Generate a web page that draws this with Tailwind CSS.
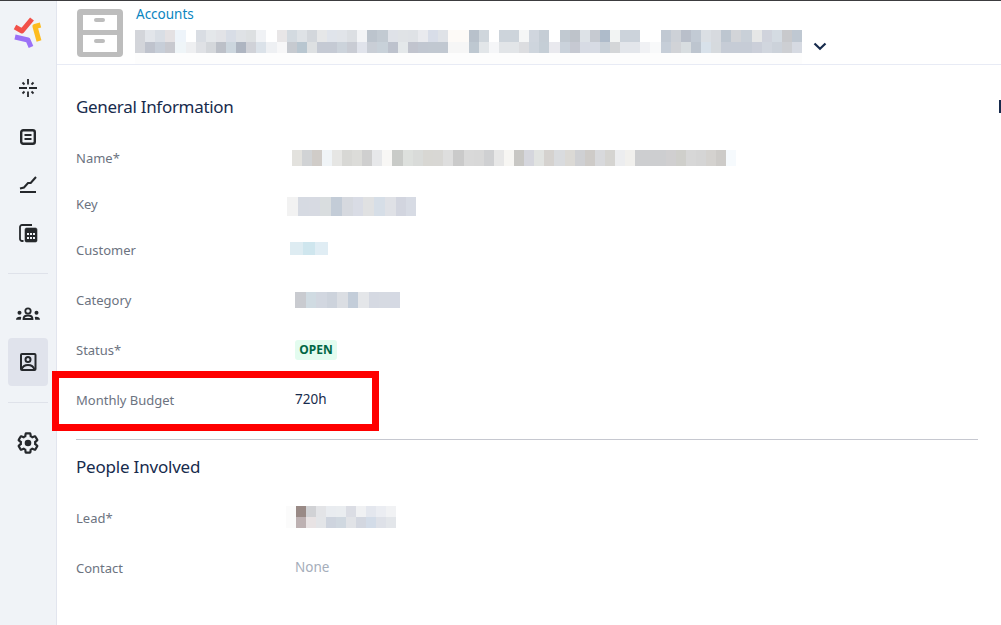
<!DOCTYPE html>
<html><head><meta charset="utf-8"><script src="https://cdn.jsdelivr.net/npm/@tailwindcss/browser@4"></script></head>
<body class="bg-white">
<div class="relative flex w-[1001px] h-[625px] overflow-hidden border-t border-[#3c3c3f] bg-white font-['Noto_Sans','Liberation_Sans',sans-serif]">
  <aside class="w-[57px] shrink-0 bg-[#f0f3f7] border-r border-[#e2e5ee] flex flex-col items-center">
    <svg class="mt-[14px] w-[32px] h-[34px]" viewBox="0 0 32 34" fill="none" stroke-linejoin="round"><path d="M3 12l7 4L20 4" stroke="#f25149" stroke-width="5"/><path d="M28.500 10 23 11.500 27 26" stroke="#fdbc1f" stroke-width="5"/><path d="M3 22l13 3 3 7" stroke="#9b71f7" stroke-width="5"/></svg>
    <svg class="mt-[27px] w-[24px] h-[24px]" viewBox="0 0 24 24" fill="none" stroke="#25282c" stroke-width="1.800"><path d="M12 3v5.500M12 15.500V21M3 12h8M13 12h8M6.500 6.500l2 2M15.500 15.500l2 2M17.500 6.500l-2 2M8.500 15.500l-2 2"/></svg>
    <svg class="mt-[25px] w-[24px] h-[24px]" viewBox="0 0 24 24" fill="none" stroke="#25282c" stroke-width="2.400"><rect x="5.200" y="5.200" width="13.600" height="13.600" rx="2"/><path d="M8.500 10h7M8.500 14h7" stroke-width="2"/></svg>
    <svg class="mt-[25px] w-[24px] h-[24px]" viewBox="0 0 24 24" fill="none" stroke="#25282c" stroke-width="2"><path d="M4 18h16"/><path d="M4 14.500 8 13.500 12 9h2.700l2.600-3L20 3" stroke-width="2"/></svg>
    <svg class="mt-[23px] w-[24px] h-[24px]" viewBox="0 0 24 24" fill="none" stroke="#25282c" stroke-width="1.800"><path d="M7.500 20H6a2 2 0 0 1-2-2V6a2 2 0 0 1 2-2h10"/><rect x="9" y="7" width="12" height="14" rx="1.500" fill="#25282c" stroke-width="0.600"/><path d="M11 13h2M14 13h2M17 13h2M11 17h2M14 17h2M17 17h2" stroke="#f0f3f7" stroke-width="1.800"/></svg>
    <div class="mt-[28px] w-[40px] h-px bg-[#dfe2ea]"></div>
    <svg class="mt-[28px] w-[24px] h-[24px]" viewBox="0 0 24 24" fill="#25282c"><circle cx="12" cy="9" r="2.700" fill="none" stroke="#25282c" stroke-width="1.800"/><circle cx="3.500" cy="10.700" r="2"/><circle cx="20.500" cy="10.700" r="2"/><path d="M7.500 17c0-2.300 2-3.500 4.500-3.500s4.500 1.200 4.500 3.500z" fill="none" stroke="#25282c" stroke-width="1.800"/><path d="M0 17.800c0-1.800 1.500-3 4-3l1.200.2L4.800 17.800zM24 17.800c0-1.800-1.500-3-4-3l-1.200.2.400 2.800z"/></svg>
    <div class="mt-[12px] w-[40px] h-[48px] rounded-[4px] bg-[#e0e3ec] flex items-center justify-center">
      <svg class="w-[24px] h-[24px]" viewBox="0 0 24 24" fill="none" stroke="#25282c" stroke-width="2"><rect x="5" y="4" width="14.500" height="16" rx="1"/><circle cx="12" cy="9.500" r="2.500"/><path d="M5.500 19.500c1-3 3.500-4.500 6.500-4.500s5.500 1.500 6.500 4.500"/></svg>
    </div>
    <div class="mt-[16px] w-[40px] h-px bg-[#dfe2ea]"></div>
    <svg class="mt-[28px] w-[24px] h-[24px]" viewBox="0 0 24 24" fill="none" stroke="#25282c" stroke-width="2.200"><path d="M19.140 12.940c.04-.3.06-.61.06-.94 0-.32-.02-.64-.07-.94l2.030-1.580c.18-.14.23-.41.12-.61l-1.920-3.320c-.12-.22-.37-.29-.59-.22l-2.390.96c-.5-.38-1.030-.7-1.620-.94l-.36-2.540c-.04-.24-.24-.41-.48-.41h-3.840c-.24 0-.43.17-.47.41l-.36 2.540c-.59.24-1.130.57-1.620.94l-2.390-.96c-.22-.08-.47 0-.59.22L2.740 8.870c-.12.21-.08.47.12.61l2.030 1.580c-.05.3-.09.63-.09.94s.02.64.07.94l-2.030 1.580c-.18.14-.23.41-.12.61l1.920 3.320c.12.22.37.29.59.22l2.390-.96c.5.38 1.030.7 1.620.94l.36 2.540c.05.24.24.41.48.41h3.840c.24 0 .44-.17.47-.41l.36-2.540c.59-.24 1.130-.56 1.620-.94l2.390.96c.22.08.47 0 .59-.22l1.920-3.320c.12-.22.07-.47-.12-.61l-2.010-1.580z"/><circle cx="12" cy="12" r="3.300" fill="#25282c" stroke="none"/></svg>
  </aside>
  <main class="flex-1 min-w-0 relative">
    <header class="h-[64px] border-b border-[#e8ebf5] flex">
      <svg class="ml-[20px] mt-[8px] w-[46px] h-[48px] shrink-0" viewBox="0 0 46 48"><rect width="46" height="48" rx="4" fill="#bdbdbd"/><rect x="6" y="6" width="34" height="15" fill="#fff"/><rect x="6" y="26" width="34" height="17" fill="#fff"/><rect x="17" y="9" width="11" height="4" rx="2" fill="#bdbdbd"/><rect x="17" y="30" width="11" height="4" rx="2" fill="#bdbdbd"/></svg>
      <div class="ml-[12px] flex flex-col">
        <div class="mt-[4px] ml-px h-[25px] text-[13.5px] leading-[18px] text-[#0a85bf]">Accounts</div>
        <div class="w-[667px] h-[35px] bg-[#fdfdfd]">
          <div class="flex h-[12px]">
            <i class="w-[10px] bg-[#d3d5da]"></i><i class="w-[10px] bg-[#e2e5ea]"></i><i class="w-[10px] bg-[#d9dee5]"></i><i class="w-[10px] bg-[#e4e1e3]"></i><i class="w-[11px] bg-[#eef4fa]"></i><i class="w-[10px] bg-white"></i><i class="w-[10px] bg-[#d9dde3]"></i><i class="w-[10px] bg-[#e4e7ea]"></i><i class="w-[10px] bg-[#e2e3e7]"></i><i class="w-[10px] bg-[#d8dde6]"></i><i class="w-[10px] bg-[#dfe2e6]"></i><i class="w-[10px] bg-[#dde0e2]"></i><i class="w-[10px] bg-[#f0f2f5]"></i><i class="w-[11px] bg-white"></i><i class="w-[10px] bg-[#e8e6e7]"></i><i class="w-[10px] bg-[#d3dae0]"></i><i class="w-[10px] bg-[#dee2e6]"></i><i class="w-[10px] bg-[#d3d7dc]"></i><i class="w-[10px] bg-[#e6e7e8]"></i><i class="w-[10px] bg-[#e0e4eb]"></i><i class="w-[10px] bg-[#e1e4e9]"></i><i class="w-[10px] bg-[#dcdfe3]"></i><i class="w-[10px] bg-[#f3f4f6]"></i><i class="w-[10px] bg-[#bcc4cd]"></i><i class="w-[11px] bg-[#c2cad2]"></i><i class="w-[10px] bg-[#dfe2e8]"></i><i class="w-[10px] bg-[#e0e3e6]"></i><i class="w-[10px] bg-[#dfe2e6]"></i><i class="w-[10px] bg-[#e9eaee]"></i><i class="w-[10px] bg-[#d8dde8]"></i><i class="w-[10px] bg-[#dfe2e7]"></i><i class="w-[21px] bg-[#fdfaf7]"></i><i class="w-[10px] bg-[#b8c1cb]"></i><i class="w-[10px] bg-[#cfd6dc]"></i><i class="w-[10px] bg-white"></i><i class="w-[20px] bg-[#cdd4db]"></i><i class="w-[10px] bg-[#f5f6f6]"></i><i class="w-[10px] bg-[#d0d6de]"></i><i class="w-[10px] bg-[#c5cdd5]"></i><i class="w-[11px] bg-white"></i><i class="w-[10px] bg-[#c1c9d1]"></i><i class="w-[10px] bg-[#bec3ca]"></i><i class="w-[10px] bg-[#dde2e7]"></i><i class="w-[10px] bg-[#c6cad1]"></i><i class="w-[10px] bg-[#aebbca]"></i><i class="w-[10px] bg-[#f2f4f3]"></i><i class="w-[20px] bg-[#ccd3db]"></i><i class="w-[21px] bg-white"></i><i class="w-[10px] bg-[#c1c9d3]"></i><i class="w-[10px] bg-[#cdd1d7]"></i><i class="w-[10px] bg-[#b9bfca]"></i><i class="w-[10px] bg-[#c2cad4]"></i><i class="w-[10px] bg-[#dbdfe4]"></i><i class="w-[10px] bg-[#d7dadf]"></i><i class="w-[10px] bg-[#bdc6d0]"></i><i class="w-[10px] bg-[#d2d4d8]"></i><i class="w-[11px] bg-[#c9d0d8]"></i><i class="w-[10px] bg-[#e6e7e7]"></i><i class="w-[10px] bg-[#d0d3dc]"></i><i class="w-[10px] bg-[#d4dbe2]"></i><i class="w-[10px] bg-[#c8c9cc]"></i><i class="w-[10px] bg-[#bfc8d2]"></i>
          </div>
          <div class="flex h-[11px]">
            <i class="w-[10px] bg-[#d3d5da]"></i><i class="w-[10px] bg-[#bfc3cd]"></i><i class="w-[10px] bg-[#c7ced8]"></i><i class="w-[10px] bg-[#c8c9cf]"></i><i class="w-[11px] bg-[#eff5f8]"></i><i class="w-[10px] bg-[#eeeff1]"></i><i class="w-[10px] bg-[#dfe1e5]"></i><i class="w-[10px] bg-[#d4d7db]"></i><i class="w-[10px] bg-[#bcc0c8]"></i><i class="w-[10px] bg-[#ccd6de]"></i><i class="w-[10px] bg-[#aeb5c1]"></i><i class="w-[10px] bg-[#d0d2d8]"></i><i class="w-[10px] bg-[#dbe2e9]"></i><i class="w-[11px] bg-[#eef0f3]"></i><i class="w-[10px] bg-[#f7f7f8]"></i><i class="w-[10px] bg-[#c6cad0]"></i><i class="w-[10px] bg-[#b8c6d0]"></i><i class="w-[10px] bg-[#dde0e2]"></i><i class="w-[20px] bg-[#c5cad4]"></i><i class="w-[10px] bg-[#ccd3db]"></i><i class="w-[10px] bg-[#c9ccd4]"></i><i class="w-[10px] bg-[#e0e3eb]"></i><i class="w-[10px] bg-[#c9ced6]"></i><i class="w-[11px] bg-[#c8d1d9]"></i><i class="w-[10px] bg-[#bdc2cd]"></i><i class="w-[10px] bg-[#e4e8ea]"></i><i class="w-[10px] bg-[#c1c4ce]"></i><i class="w-[10px] bg-[#c1c7d1]"></i><i class="w-[20px] bg-[#c1c8d1]"></i><i class="w-[21px] bg-[#f6f6f6]"></i><i class="w-[10px] bg-[#bec8d1]"></i><i class="w-[10px] bg-[#e2e6e9]"></i><i class="w-[10px] bg-[#f5f6f8]"></i><i class="w-[20px] bg-[#e2e5e8]"></i><i class="w-[10px] bg-[#dcdde0]"></i><i class="w-[10px] bg-[#ced5dd]"></i><i class="w-[10px] bg-[#c5ced6]"></i><i class="w-[11px] bg-[#e9e9ee]"></i><i class="w-[10px] bg-[#cad2db]"></i><i class="w-[10px] bg-[#c6c9d2]"></i><i class="w-[20px] bg-[#d7dbe4]"></i><i class="w-[10px] bg-[#c8d0d8]"></i><i class="w-[10px] bg-[#d4d6d8]"></i><i class="w-[20px] bg-[#e3e6eb]"></i><i class="w-[10px] bg-[#f0f1f4]"></i><i class="w-[11px] bg-[#f8f9fa]"></i><i class="w-[10px] bg-[#c6ced8]"></i><i class="w-[10px] bg-[#d1d3d7]"></i><i class="w-[10px] bg-[#d8dde0]"></i><i class="w-[10px] bg-[#bdc5cf]"></i><i class="w-[10px] bg-[#d8e1ea]"></i><i class="w-[10px] bg-[#d6dade]"></i><i class="w-[31px] bg-[#c6ccd6]"></i><i class="w-[10px] bg-[#cbcfd9]"></i><i class="w-[10px] bg-[#d1d6de]"></i><i class="w-[10px] bg-[#ccd2da]"></i><i class="w-[10px] bg-[#cdcfd3]"></i><i class="w-[10px] bg-[#d6dae2]"></i>
          </div>
        </div>
      </div>
      <svg class="ml-[10px] mt-[38px] w-[16px] h-[16px]" viewBox="0 0 16 16" fill="none" stroke="#172b4d" stroke-width="2.200"><path d="M2.500 4.500 8 9.800l5.500-5.300"/></svg>
    </header>
    <div class="pl-[19px] pr-[23px]">
      <h2 class="mt-[29px] h-[26px] text-[17px] tracking-[-0.3px] leading-[26px] text-[#172b4d]">General Information</h2>
      <div class="text-[13px] text-[#6c737f]">
        <div class="mt-[28px] h-[20px] leading-[20px] flex"><span class="w-[216px] shrink-0">Name*</span>
          <div class="flex h-[16px] w-[444px] mt-[2px] shrink-0">
            <i class="w-[10px] bg-[#e3e2de]"></i><i class="w-[10px] bg-[#d1d3d5]"></i><i class="w-[10px] bg-[#d0ccc8]"></i><i class="w-[10px] bg-[#f0f4f7]"></i><i class="w-[10px] bg-[#e6e6e4]"></i><i class="w-[10px] bg-[#d8d8d5]"></i><i class="w-[10px] bg-[#dcdcd9]"></i><i class="w-[10px] bg-[#cfcfcf]"></i><i class="w-[10px] bg-[#e7e8ea]"></i><i class="w-[10px] bg-[#f8f7f5]"></i><i class="w-[11px] bg-[#c9cbc8]"></i><i class="w-[10px] bg-[#dde0dd]"></i><i class="w-[10px] bg-[#d9dbd9]"></i><i class="w-[10px] bg-[#d8d7d3]"></i><i class="w-[10px] bg-[#d8d7d4]"></i><i class="w-[10px] bg-[#dedede]"></i><i class="w-[11px] bg-[#cacaca]"></i><i class="w-[10px] bg-[#d9d9d9]"></i><i class="w-[10px] bg-[#d8d8d8]"></i><i class="w-[10px] bg-[#cfd0d2]"></i><i class="w-[10px] bg-[#e7e7e7]"></i><i class="w-[10px] bg-[#f7f6f3]"></i><i class="w-[10px] bg-[#c8c7c4]"></i><i class="w-[10px] bg-[#d5d6dd]"></i><i class="w-[10px] bg-[#e1e3e1]"></i><i class="w-[10px] bg-[#d5d2cf]"></i><i class="w-[11px] bg-[#d9dbde]"></i><i class="w-[10px] bg-[#dbd9d5]"></i><i class="w-[10px] bg-[#cfd0d3]"></i><i class="w-[10px] bg-[#cecbc8]"></i><i class="w-[10px] bg-[#d8d9dc]"></i><i class="w-[10px] bg-[#d5d4d1]"></i><i class="w-[10px] bg-[#ecedef]"></i><i class="w-[10px] bg-[#f1f0ed]"></i><i class="w-[31px] bg-[#cdced0]"></i><i class="w-[10px] bg-[#d0cfd0]"></i><i class="w-[10px] bg-[#cfcfcb]"></i><i class="w-[10px] bg-[#d7d7d7]"></i><i class="w-[10px] bg-[#d5d5d5]"></i><i class="w-[10px] bg-[#d4d2cf]"></i><i class="w-[10px] bg-[#cdcbc8]"></i><i class="w-[10px] bg-[#f6fafd]"></i>
          </div>
        </div>
        <div class="mt-[26px] h-[20px] leading-[20px] flex"><span class="w-[211px] shrink-0">Key</span>
          <div class="flex h-[19px] mt-[3px] shrink-0">
            <i class="w-[11px] bg-[#f2f2f2]"></i><i class="w-[11px] bg-[#d6dae2]"></i><i class="w-[11px] bg-[#d7dae2]"></i><i class="w-[11px] bg-[#d9dddf]"></i><i class="w-[11px] bg-[#c3ccd7]"></i><i class="w-[11px] bg-[#d6d9df]"></i><i class="w-[10px] bg-[#d9dce5]"></i><i class="w-[11px] bg-[#e0e1e2]"></i><i class="w-[11px] bg-[#d6dee7]"></i><i class="w-[11px] bg-[#dfe1e6]"></i><i class="w-[10px] bg-[#d2d5df]"></i><i class="w-[10px] bg-[#d7dbe4]"></i>
          </div>
        </div>
        <div class="mt-[26px] h-[20px] leading-[20px] flex"><span class="w-[214px] shrink-0">Customer</span>
          <div class="flex h-[13px] mt-[2px] shrink-0"><i class="w-[13px] bg-[#deecf2]"></i><i class="w-[12px] bg-[#cfe6ee]"></i><i class="w-[13px] bg-[#e0edf4]"></i></div>
        </div>
        <div class="mt-[30px] h-[20px] leading-[20px] flex"><span class="w-[219px] shrink-0">Category</span>
          <div class="flex h-[16px] mt-[2px] shrink-0"><i class="w-[11px] bg-[#c9cbd0]"></i><i class="w-[10px] bg-[#d0dbe2]"></i><i class="w-[11px] bg-[#d2d7e0]"></i><i class="w-[10px] bg-[#cdd3dc]"></i><i class="w-[11px] bg-[#dbdee3]"></i><i class="w-[10px] bg-[#c3cdd9]"></i><i class="w-[11px] bg-[#e4e6e9]"></i><i class="w-[10px] bg-[#d5d9e2]"></i><i class="w-[11px] bg-[#d6dae2]"></i><i class="w-[10px] bg-[#d5d9e3]"></i></div>
        </div>
        <div class="mt-[30px] h-[20px] leading-[20px] flex"><span class="w-[219px] shrink-0">Status*</span>
          <span class="w-[42px] h-[20px] rounded-[3px] bg-[#e3fcef] text-[#006644] text-[12px] font-bold leading-[20px] text-center">OPEN</span>
        </div>
        <div class="mt-[30px] h-[20px] leading-[20px] flex"><span class="w-[219px] shrink-0">Monthly Budget</span><span class="text-[13.5px] text-[#172b4d] -mt-px">720h</span></div>
      </div>
      <div class="mt-[29px] h-px bg-[#c6c8d0]"></div>
      <h2 class="mt-[14px] h-[26px] text-[17px] tracking-[-0.2px] leading-[26px] text-[#172b4d]">People Involved</h2>
      <div class="text-[13px] text-[#6c737f]">
        <div class="mt-[28px] h-[20px] leading-[20px] flex"><span class="w-[210px] shrink-0">Lead*</span>
          <div class="-mt-[2px] w-[110px] h-[22px] shrink-0 grid grid-cols-[repeat(11,10px)] grid-rows-2">
            <i class="bg-[#fbfbfb]"></i><i class="bg-[#998a86]"></i><i class="bg-[#d1d2d5]"></i><i class="bg-[#e3e4e7]"></i><i class="bg-[#e9ecf0]"></i><i class="bg-[#eaedf0]"></i><i class="bg-[#dbdde4]"></i><i class="bg-[#f0f1f3]"></i><i class="bg-[#e4e7ee]"></i><i class="bg-[#ebedf2]"></i><i class="bg-[#f1f2f4]"></i>
            <i class="bg-[#fbfbfb]"></i><i class="bg-[#bdb1b2]"></i><i class="bg-[#e8e3e4]"></i><i class="bg-[#e3e5e8]"></i><i class="bg-[#ced4de]"></i><i class="bg-[#d0d8e0]"></i><i class="bg-[#e1e3e7]"></i><i class="bg-[#d3d7e0]"></i><i class="bg-[#d3dce8]"></i><i class="bg-[#dee1e8]"></i><i class="bg-[#e3e6ea]"></i>
          </div>
        </div>
        <div class="mt-[30px] h-[20px] leading-[20px] flex"><span class="w-[219px] shrink-0">Contact</span><span class="text-[13.5px] text-[#a5adba] -mt-[1px]">None</span></div>
      </div>
    </div>
    <div class="absolute right-0 top-[99px] w-[2px] h-[13px] bg-[#172b4d]"></div>
  </main>
  <div class="absolute left-[52px] top-[370px] w-[327px] h-[60px] border-[7px] border-[#ff0000]"></div>
</div>
</body></html>
